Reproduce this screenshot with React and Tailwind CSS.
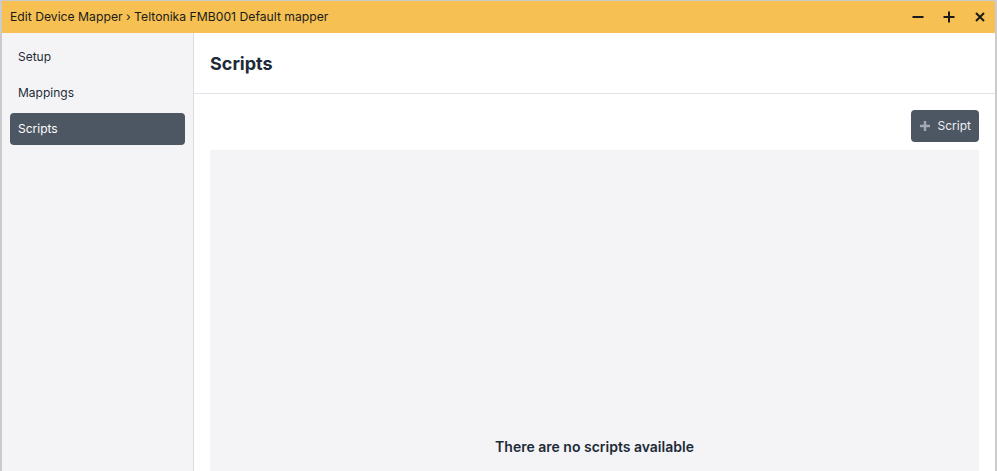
import React from "react";

const font = { fontFamily: "Inter, 'Noto Sans', sans-serif" };

function Sidebar() {
  const items = ["Setup", "Mappings", "Scripts"];
  return (
    <div className="w-[192px] shrink-0 bg-[#f4f4f6] border-r border-[#dcdde3] px-2 pt-2 flex flex-col gap-1">
      {items.map((item) => (
        <div
          key={item}
          className={`h-8 flex items-center px-2 rounded text-[12px] ${
            item === "Scripts" ? "bg-[#4d5663] text-white" : "text-[#1e2b37]"
          }`}
        >
          {item}
        </div>
      ))}
    </div>
  );
}

export default function App() {
  return (
    <div className="w-full h-[471px] bg-[#cbcbcb] px-[2px] pt-[1px] overflow-hidden" style={font}>
      <div className="h-[600px] bg-white flex flex-col">
        {/* Title bar */}
        <div className="h-[32px] shrink-0 bg-[#f6c052] flex items-center justify-between pl-2 pr-2 text-[12.2px] text-[#1b1b1b]">
          <span>Edit Device Mapper › Teltonika FMB001 Default mapper</span>
          <div className="flex items-center gap-[17px]">
            <svg width="14" height="14" viewBox="0 0 14 14">
              <path d="M1.5 7h11" stroke="#1b1b1b" strokeWidth="2" />
            </svg>
            <svg width="14" height="14" viewBox="0 0 14 14">
              <path d="M1.5 7h11M7 1.5v11" stroke="#1b1b1b" strokeWidth="2" />
            </svg>
            <svg width="14" height="14" viewBox="0 0 14 14">
              <path d="M3 3l8 8M11 3l-8 8" stroke="#1b1b1b" strokeWidth="2" />
            </svg>
          </div>
        </div>

        <div className="flex flex-1">
          <Sidebar />
          <div className="flex-1 flex flex-col">
            <div className="h-[61px] border-b border-[#e2e3e8] flex items-center px-4">
              <h1 className="text-[18px] font-bold text-[#1c2b37]">Scripts</h1>
            </div>
            <div className="px-4 pt-4 flex flex-col gap-2">
              <div className="flex justify-end">
                <button className="h-8 px-2 rounded bg-[#4d5663] flex items-center gap-[7px] text-[12px] text-[#eef0f3]">
                  <svg width="12" height="12" viewBox="0 0 12 12">
                    <path d="M6 1v10M1 6h10" stroke="#a3a9b2" strokeWidth="2.4" />
                  </svg>
                  Script
                </button>
              </div>
              <div className="h-[400px] bg-[#f4f4f6] flex justify-center pt-[286px]">
                <p className="text-[14px] font-semibold text-[#1c2b37]">There are no scripts available</p>
              </div>
            </div>
          </div>
        </div>
      </div>
    </div>
  );
}
